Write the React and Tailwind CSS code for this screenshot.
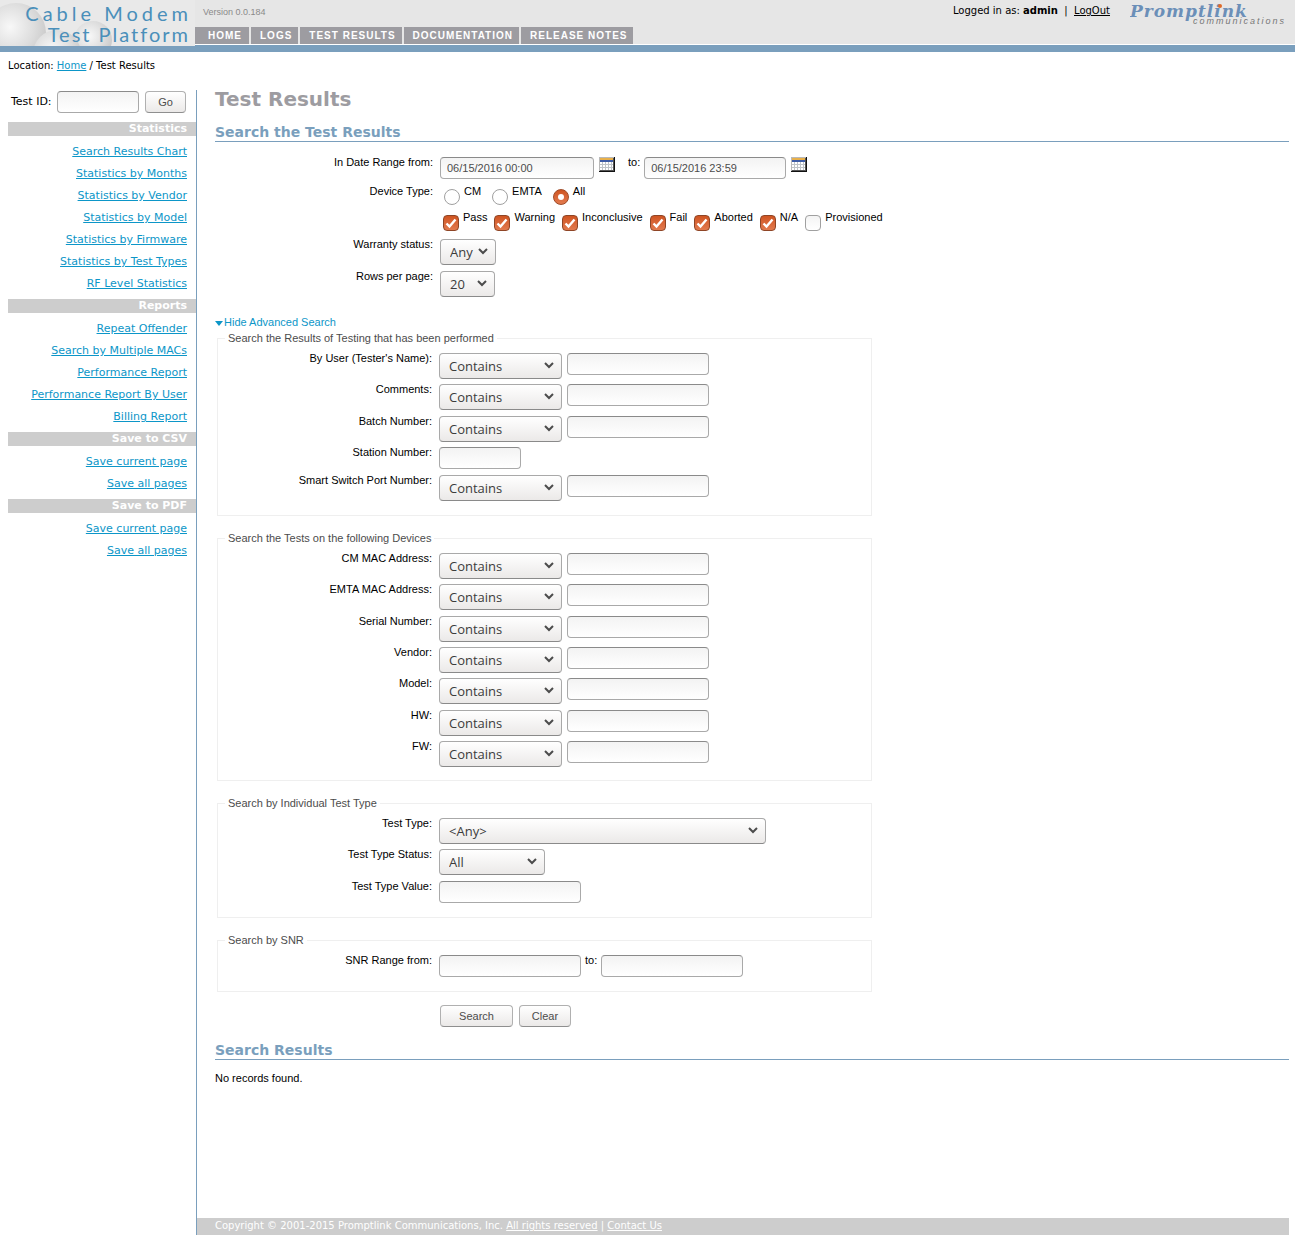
import React, { useState } from 'react';

const NAV = ['HOME', 'LOGS', 'TEST RESULTS', 'DOCUMENTATION', 'RELEASE NOTES'];

const MENU = [
  {
    title: 'Statistics',
    links: [
      'Search Results Chart',
      'Statistics by Months',
      'Statistics by Vendor',
      'Statistics by Model',
      'Statistics by Firmware',
      'Statistics by Test Types',
      'RF Level Statistics',
    ],
  },
  {
    title: 'Reports',
    links: [
      'Repeat Offender',
      'Search by Multiple MACs',
      'Performance Report',
      'Performance Report By User',
      'Billing Report',
    ],
  },
  { title: 'Save to CSV', links: ['Save current page', 'Save all pages'] },
  { title: 'Save to PDF', links: ['Save current page', 'Save all pages'] },
];

const STATUSES = ['Pass', 'Warning', 'Inconclusive', 'Fail', 'Aborted', 'N/A', 'Provisioned'];

const MATCH_OPTIONS = ['Contains', 'Equals', 'Starts with'];

const DEVICE_FIELDS = ['CM MAC Address', 'EMTA MAC Address', 'Serial Number', 'Vendor', 'Model', 'HW', 'FW'];

const TextInput = ({ className, ...props }) => (
  <input
    type="text"
    className={`h-[22px] rounded border border-[#a9a9a9] border-t-[#8a8a8a] bg-linear-to-b from-[#f3f3f3] to-white px-1.5 text-[11px] text-[#4c4c4c] ${className}`}
    {...props}
  />
);

const Select = ({ options, className, ...props }) => (
  <span className={`relative block h-[26px] ${className}`}>
    <select
      className="h-full w-full appearance-none rounded border border-[#a9a9a9] border-b-[#8a8a8a] bg-linear-to-b from-white to-[#ebe9e8] pl-[9px] font-['Open_Sans',sans-serif] text-[13px] leading-6 text-[#3c3c3c]"
      {...props}
    >
      {options.map((o) => (
        <option key={o}>{o}</option>
      ))}
    </select>
    <svg className="pointer-events-none absolute top-[9px] right-2 h-[7px] w-[10px]" viewBox="0 0 10 7">
      <path d="M1 1 L5 5 L9 1" fill="none" stroke="#4c4c4c" strokeWidth="2" />
    </svg>
  </span>
);

const Button = ({ className, ...props }) => (
  <button
    className={`h-[22px] rounded border border-[#b0b0b0] border-b-[#8f8f8f] bg-linear-to-b from-white to-[#ebe9e8] font-['Liberation_Sans',Arial,sans-serif] text-[11px] text-[#4c4c4c] ${className}`}
    {...props}
  />
);

const Check = ({ label, ...props }) => (
  <label className="flex items-start gap-1">
    <span className="relative mt-[3px] size-4">
      <input
        type="checkbox"
        className="peer block size-4 appearance-none rounded-[4px] border border-[#a0a0a0] bg-linear-to-b from-[#f4f4f4] to-white checked:border-[#8f4526] checked:from-[#cf5420] checked:to-[#e27a4e]"
        {...props}
      />
      <svg className="pointer-events-none absolute top-0 left-0 hidden size-4 peer-checked:block" viewBox="0 0 16 16">
        <path d="M3.5 8.5 L6.5 11.5 L12.5 4.5" fill="none" stroke="#fff" strokeWidth="2.4" />
      </svg>
    </span>
    {label}
  </label>
);

const Radio = ({ label, ...props }) => (
  <label className="flex items-start gap-1">
    <span className="relative mt-[3px] size-4">
      <input
        type="radio"
        className="peer block size-4 appearance-none rounded-full border border-[#a0a0a0] bg-white checked:border-[#a04a26] checked:bg-linear-to-b checked:from-[#cf5420] checked:to-[#e27a4e]"
        {...props}
      />
      <span className="pointer-events-none absolute top-[5px] left-[5px] hidden size-1.5 rounded-full bg-white peer-checked:block" />
    </span>
    {label}
  </label>
);

const CalendarIcon = () => (
  <svg className="block h-[15px] w-4" viewBox="0 0 16 15">
    <rect width="16" height="15" fill="#111" />
    <rect width="15" height="14" fill="#b9b9b9" />
    <rect x="1" y="1" width="14" height="13" fill="#fff" />
    <rect x="1" y="1" width="13" height="2" fill="#e8b04a" />
    <rect x="1" y="3" width="13" height="2" fill="#3c5ba6" />
    <path d="M1 7.5H14M1 10.5H14M3.5 5V14M6.5 5V14M9.5 5V14M12.5 5V14" stroke="#bfc4c8" strokeWidth="1" />
    <path d="M1 13.5H15M14.5 1V14" stroke="#555" strokeWidth="1" />
  </svg>
);

const Row = ({ id, label, children, className = '' }) => (
  <div className={`flex items-start leading-[10px] ${className}`}>
    <label htmlFor={id} className="mr-[7px] w-[214px] shrink-0 text-right">
      {label}:
    </label>
    {children}
  </div>
);

const MatchRow = ({ label }) => {
  const id = label.toLowerCase().replace(/[^a-z]+/g, '-');
  return (
    <Row id={id} label={label} className="h-[31px] nth-[3n+2]:h-8">
      <Select className="w-[123px]" options={MATCH_OPTIONS} aria-label={`${label} match`} />
      <TextInput id={id} className="ml-[5px] w-[142px]" />
    </Row>
  );
};

const Group = ({ title, children }) => (
  <fieldset className="mt-4 ml-0.5 max-w-[655px] border border-[#efefef] pb-2">
    <legend className="ml-[7px] px-[3px] leading-[13px] text-[#4c4c4c]">{title}</legend>
    <div className="pt-2">{children}</div>
  </fieldset>
);

const SectionTitle = ({ children }) => (
  <h2 className="border-b border-[#7a9fbd] font-['DejaVu_Sans',sans-serif] text-[14px] leading-[18px] font-bold text-[#7a9fbd]">
    {children}
  </h2>
);

const Header = () => (
  <header className="font-['DejaVu_Sans',Verdana,sans-serif] text-[10px]">
    <div className="flex h-[45px] border-b border-white bg-[#e6e6e6]">
      <svg className="h-[46px] w-[195px] shrink-0" viewBox="0 0 195 46" role="img" aria-label="Cable Modem Test Platform">
        <defs>
          <radialGradient id="ball" cx="0.4" cy="0.4" r="0.65">
            <stop offset="0" stopColor="#f8f8f8" />
            <stop offset="0.6" stopColor="#dedede" />
            <stop offset="1" stopColor="#c9c9c9" />
          </radialGradient>
        </defs>
        <rect width="195" height="46" fill="#e9e9e9" />
        <circle cx="16" cy="33" r="30" fill="url(#ball)" />
        <circle cx="93" cy="40" r="19" fill="url(#ball)" />
        <circle cx="57" cy="54" r="24" fill="url(#ball)" />
        <text x="192" y="21" textAnchor="end" className="fill-[#4a8fba] font-['Lato',sans-serif] text-[20px] tracking-[4px]">
          Cable Modem
        </text>
        <text x="190" y="42" textAnchor="end" className="fill-[#4a8fba] font-['Lato',sans-serif] text-[20px] tracking-[2px]">
          Test Platform
        </text>
      </svg>
      <div className="flex flex-1 flex-col justify-between">
        <span className="pt-[6px] pl-2 font-['Liberation_Sans',Arial,sans-serif] text-[9px] leading-3 text-[#8a8a8a]">
          Version 0.0.184
        </span>
        <nav className="flex gap-0.5 font-['Liberation_Sans',Arial,sans-serif] font-bold tracking-[1px] text-white">
          {NAV.map((item) => (
            <a key={item} href="#" className="bg-[#9d9ca1] pr-1.5 pl-[9px] leading-[17px] first:pr-[7px] first:pl-[13px]">
              {item}
            </a>
          ))}
        </nav>
      </div>
      <div className="pt-1 leading-[13px]">
        Logged in as: <b>admin</b> &nbsp;|&nbsp; <a href="#" className="underline">LogOut</a>
      </div>
      <svg className="mt-0.5 mr-1.5 ml-5 h-6 w-[159px] shrink-0" viewBox="0 0 159 24" role="img" aria-label="Promptlink communications">
        <text x="0" y="15" className="fill-[#6b8fb8] font-['DejaVu_Serif',serif] text-[17px] font-bold italic tracking-[1px]">
          Promptlink
        </text>
        <circle cx="90" cy="4" r="2" fill="#e06a28" />
        <text x="63" y="22" className="fill-[#777] font-['Liberation_Sans',sans-serif] text-[9px] tracking-[2px] italic">
          communications
        </text>
      </svg>
    </div>
    <div className="h-[7px] bg-[#7a9fbd]" />
    <div className="h-[38px] pt-[7px] pl-2 leading-[13px]">
      Location: <a href="#" className="text-[#0c96c8] underline">Home</a> / Test Results
    </div>
  </header>
);

const Sidebar = () => (
  <aside className="w-[197px] shrink-0 border-r border-[#7a9fbd] pl-2 font-['DejaVu_Sans',Verdana,sans-serif]">
    <form className="flex h-8 items-start pt-px pl-[3px]">
      <label htmlFor="test-id" className="w-[46px] leading-[22px]">Test ID:</label>
      <TextInput id="test-id" className="w-[82px]" />
      <Button type="button" className="ml-1.5 w-[41px]">Go</Button>
    </form>
    {MENU.map((section) => (
      <section key={section.title} className="text-right">
        <h3 className="h-[14px] bg-[#cdcdcd] pr-[9px] leading-[14px] font-bold text-white">{section.title}</h3>
        <ul className="pt-[5px] pr-[9px] pb-1">
          {section.links.map((link) => (
            <li key={link} className="leading-[22px]">
              <a href="#" className="text-[#0c96c8] underline">{link}</a>
            </li>
          ))}
        </ul>
      </section>
    ))}
  </aside>
);

const App = () => {
  const [device, setDevice] = useState('All');
  const [statuses, setStatuses] = useState(STATUSES.slice(0, 6));

  const toggleStatus = (name) => {
    setStatuses(statuses.includes(name) ? statuses.filter((s) => s !== name) : [...statuses, name]);
  };

  return (
    <div className="flex min-h-screen flex-col bg-white pb-1.5 font-['Liberation_Sans',Arial,sans-serif] text-[11px] text-black">
      <Header />
      <div className="flex flex-1">
        <Sidebar />
        <div className="mr-1.5 flex flex-1 flex-col">
          <main className="flex-1 pl-[18px]">
            <h1 className="font-['DejaVu_Sans',sans-serif] text-[20px] leading-[18px] font-bold text-[#9d9ca1]">
              Test Results
            </h1>
            <div className="pt-[15px]">
              <SectionTitle>Search the Test Results</SectionTitle>
            </div>

            <form>
              <div className="pt-[15px] pl-1">
                <Row id="date-from" label="In Date Range from" className="h-[29px]">
                  <TextInput id="date-from" className="w-[154px]" defaultValue="06/15/2016 00:00" />
                  <button type="button" className="ml-[5px]" aria-label="Pick start date"><CalendarIcon /></button>
                  <label htmlFor="date-to" className="mr-1 ml-[13px]">to:</label>
                  <TextInput id="date-to" className="w-[142px]" defaultValue="06/15/2016 23:59" />
                  <button type="button" className="ml-[5px]" aria-label="Pick end date"><CalendarIcon /></button>
                </Row>
                <div className="flex h-[26px] items-start leading-[10px]">
                  <span className="mr-[11px] w-[214px] text-right">Device Type:</span>
                  <div className="flex gap-[11px]">
                    {['CM', 'EMTA', 'All'].map((d) => (
                      <Radio key={d} name="device" label={d} checked={device === d} onChange={() => setDevice(d)} />
                    ))}
                  </div>
                </div>
                <div className="flex h-[27px] gap-[7px] pl-[224px] leading-[10px]">
                  {STATUSES.map((s) => (
                    <Check key={s} label={s} checked={statuses.includes(s)} onChange={() => toggleStatus(s)} />
                  ))}
                </div>
                <Row id="warranty" label="Warranty status" className="h-8">
                  <Select id="warranty" className="w-14" options={['Any', 'Yes', 'No']} />
                </Row>
                <Row id="rows" label="Rows per page" className="h-[45px]">
                  <Select id="rows" className="w-[55px]" options={['20', '50', '100']} />
                </Row>
              </div>

              <a href="#" className="flex items-center gap-px leading-[13px] text-[#0c96c8]">
                <svg className="mt-0.5 h-[5px] w-2" viewBox="0 0 8 5">
                  <path d="M0 0H8L4 5Z" fill="currentColor" />
                </svg>
                Hide Advanced Search
              </a>

              <div className="-mt-[13px]">
                <Group title="Search the Results of Testing that has been performed">
                  <MatchRow label="By User (Tester's Name)" />
                  <MatchRow label="Comments" />
                  <MatchRow label="Batch Number" />
                  <Row id="station" label="Station Number" className="h-7">
                    <TextInput id="station" className="w-[82px]" />
                  </Row>
                  <MatchRow label="Smart Switch Port Number" />
                </Group>
                <Group title="Search the Tests on the following Devices">
                  {DEVICE_FIELDS.map((f) => (
                    <MatchRow key={f} label={f} />
                  ))}
                </Group>
                <Group title="Search by Individual Test Type">
                  <Row id="test-type" label="Test Type" className="h-[31px]">
                    <Select id="test-type" className="w-[327px]" options={['<Any>']} />
                  </Row>
                  <Row id="type-status" label="Test Type Status" className="h-8">
                    <Select id="type-status" className="w-[106px]" options={['All', 'Pass', 'Fail']} />
                  </Row>
                  <Row id="type-value" label="Test Type Value" className="h-7">
                    <TextInput id="type-value" className="w-[142px]" />
                  </Row>
                </Group>
                <Group title="Search by SNR">
                  <Row id="snr-from" label="SNR Range from" className="h-7">
                    <TextInput id="snr-from" className="w-[142px]" />
                    <label htmlFor="snr-to" className="mx-1">to:</label>
                    <TextInput id="snr-to" className="w-[142px]" />
                  </Row>
                </Group>
              </div>

              <div className="flex gap-1.5 pt-[13px] pb-[14px] pl-[225px]">
                <Button type="submit" className="w-[73px]">Search</Button>
                <Button type="reset" className="w-[52px]">Clear</Button>
              </div>
            </form>

            <SectionTitle>Search Results</SectionTitle>
            <p className="py-3 leading-[13px]">No records found.</p>
          </main>
          <footer className="h-[17px] bg-[#cdcdcd] pl-[18px] font-['DejaVu_Sans',Verdana,sans-serif] text-[10px] leading-[15px] text-white">
            Copyright © 2001-2015 Promptlink Communications, Inc.{' '}
            <a href="#" className="underline">All rights reserved</a> |{' '}
            <a href="#" className="underline">Contact Us</a>
          </footer>
        </div>
      </div>
    </div>
  );
};

export default App;
